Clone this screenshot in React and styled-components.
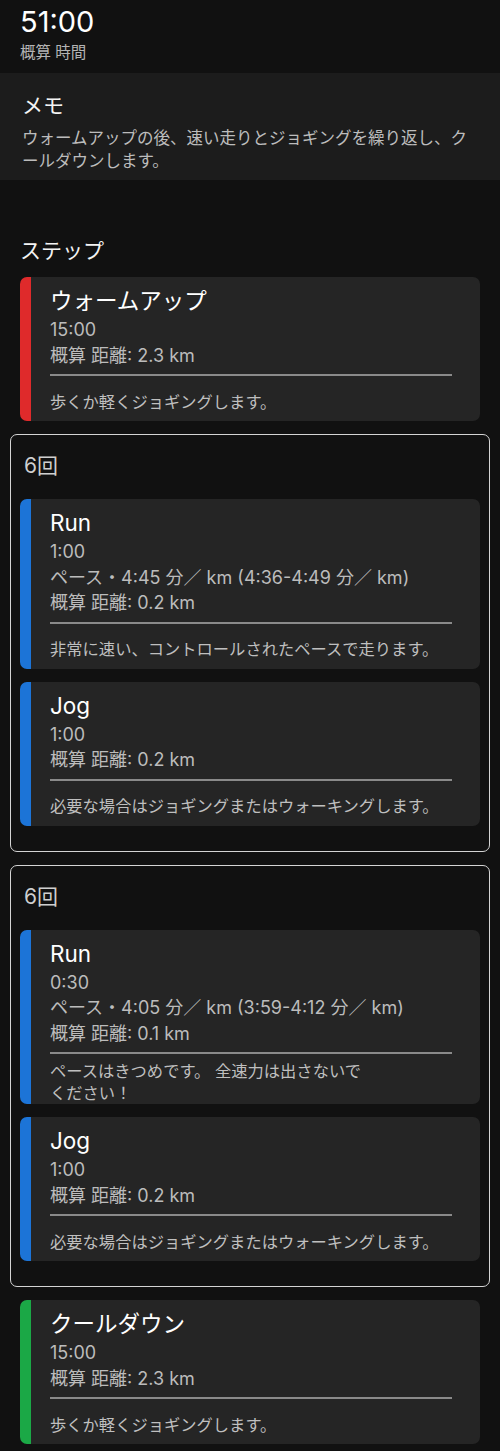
import React from "react";
import styled, { createGlobalStyle } from "styled-components";

const Global = createGlobalStyle`
  html, body { margin: 0; padding: 0; background: #111111; }
  body {
    font-family: Inter, "Noto Sans CJK JP", "Noto Sans", sans-serif;
    color: #fff;
    -webkit-font-smoothing: antialiased;
  }
`;

const Page = styled.div`
  width: 500px;
  min-height: 1451px;
  background: #111111;
  padding-bottom: 8px;
  box-sizing: border-box;
`;

const Header = styled.header`
  padding: 5px 20px 9px;
`;

const TotalTime = styled.div`
  font-size: 29px;
  line-height: 34px;
  color: #ffffff;
`;

const TotalLabel = styled.div`
  margin-top: 3px;
  font-size: 15.5px;
  line-height: 22px;
  color: #b4b4b4;
`;

const Memo = styled.section`
  background: #1c1c1c;
  padding: 19px 22px 8px;
`;

const SectionTitle = styled.h2`
  margin: 0;
  font-size: 21px;
  line-height: 28px;
  font-weight: 400;
  color: #f4f4f4;
`;

const MemoText = styled.p`
  margin: 7px 0 0;
  font-size: 16.5px;
  line-height: 22.5px;
  color: #bcbcbc;
`;

const Steps = styled.section`
  padding: 57px 20px 0;
`;

const StepList = styled.div`
  display: flex;
  flex-direction: column;
  gap: 13px;
  margin-top: 12px;
`;

const Card = styled.div`
  background: #252525;
  border-left: 11px solid ${(p) => p.$accent};
  border-radius: 7px;
  padding: 8px 28px 0 19px;
`;

const CardTitle = styled.div`
  font-size: 22.5px;
  line-height: 32px;
  color: #ffffff;
`;

const Detail = styled.div`
  font-size: 18px;
  line-height: 25.5px;
  color: #bcbcbc;
  white-space: nowrap;
`;

const Divider = styled.div`
  height: 2px;
  background: #8a8a8a;
  margin-top: 6px;
`;

const Description = styled.div`
  box-sizing: border-box;
  min-height: 45px;
  padding-top: 6px;
  display: flex;
  align-items: center;
  font-size: 16.3px;
  line-height: 22px;
  color: #bfbfbf;
`;

const RepeatBox = styled.div`
  margin: 0 -10px;
  border: 1px solid #d4d4d4;
  border-radius: 7px;
  padding: 15px 9px 25px;
`;

const RepeatLabel = styled.div`
  font-size: 21px;
  line-height: 32px;
  padding-left: 4px;
  color: #cfcfcf;
  margin-bottom: 17px;
`;

const InnerList = styled.div`
  display: flex;
  flex-direction: column;
  gap: 13px;
`;

const RED = "#df2a2b";
const BLUE = "#1c74d7";
const GREEN = "#1ba846";

function StepCard({ accent, title, details, desc }) {
  return (
    <Card $accent={accent}>
      <CardTitle>{title}</CardTitle>
      {details.map((d, i) => (
        <Detail key={i}>{d}</Detail>
      ))}
      <Divider />
      <Description>
        <span>{desc}</span>
      </Description>
    </Card>
  );
}

function Repeat({ count, children }) {
  return (
    <RepeatBox>
      <RepeatLabel>{count}回</RepeatLabel>
      <InnerList>{children}</InnerList>
    </RepeatBox>
  );
}

export default function App() {
  return (
    <Page>
      <Global />
      <Header>
        <TotalTime>51:00</TotalTime>
        <TotalLabel>概算 時間</TotalLabel>
      </Header>
      <Memo>
        <SectionTitle>メモ</SectionTitle>
        <MemoText>
          ウォームアップの後、速い走りとジョギングを繰り返し、クールダウンします。
        </MemoText>
      </Memo>
      <Steps>
        <SectionTitle>ステップ</SectionTitle>
        <StepList>
          <StepCard
            accent={RED}
            title="ウォームアップ"
            details={["15:00", "概算 距離: 2.3 km"]}
            desc="歩くか軽くジョギングします。"
          />
          <Repeat count={6}>
            <StepCard
              accent={BLUE}
              title="Run"
              details={[
                "1:00",
                "ペース・4:45 分／ km (4:36-4:49 分／ km)",
                "概算 距離: 0.2 km",
              ]}
              desc="非常に速い、コントロールされたペースで走ります。"
            />
            <StepCard
              accent={BLUE}
              title="Jog"
              details={["1:00", "概算 距離: 0.2 km"]}
              desc="必要な場合はジョギングまたはウォーキングします。"
            />
          </Repeat>
          <Repeat count={6}>
            <StepCard
              accent={BLUE}
              title="Run"
              details={[
                "0:30",
                "ペース・4:05 分／ km (3:59-4:12 分／ km)",
                "概算 距離: 0.1 km",
              ]}
              desc={
                <>
                  ペースはきつめです。 全速力は出さないで
                  <br />
                  ください！
                </>
              }
            />
            <StepCard
              accent={BLUE}
              title="Jog"
              details={["1:00", "概算 距離: 0.2 km"]}
              desc="必要な場合はジョギングまたはウォーキングします。"
            />
          </Repeat>
          <StepCard
            accent={GREEN}
            title="クールダウン"
            details={["15:00", "概算 距離: 2.3 km"]}
            desc="歩くか軽くジョギングします。"
          />
        </StepList>
      </Steps>
    </Page>
  );
}
